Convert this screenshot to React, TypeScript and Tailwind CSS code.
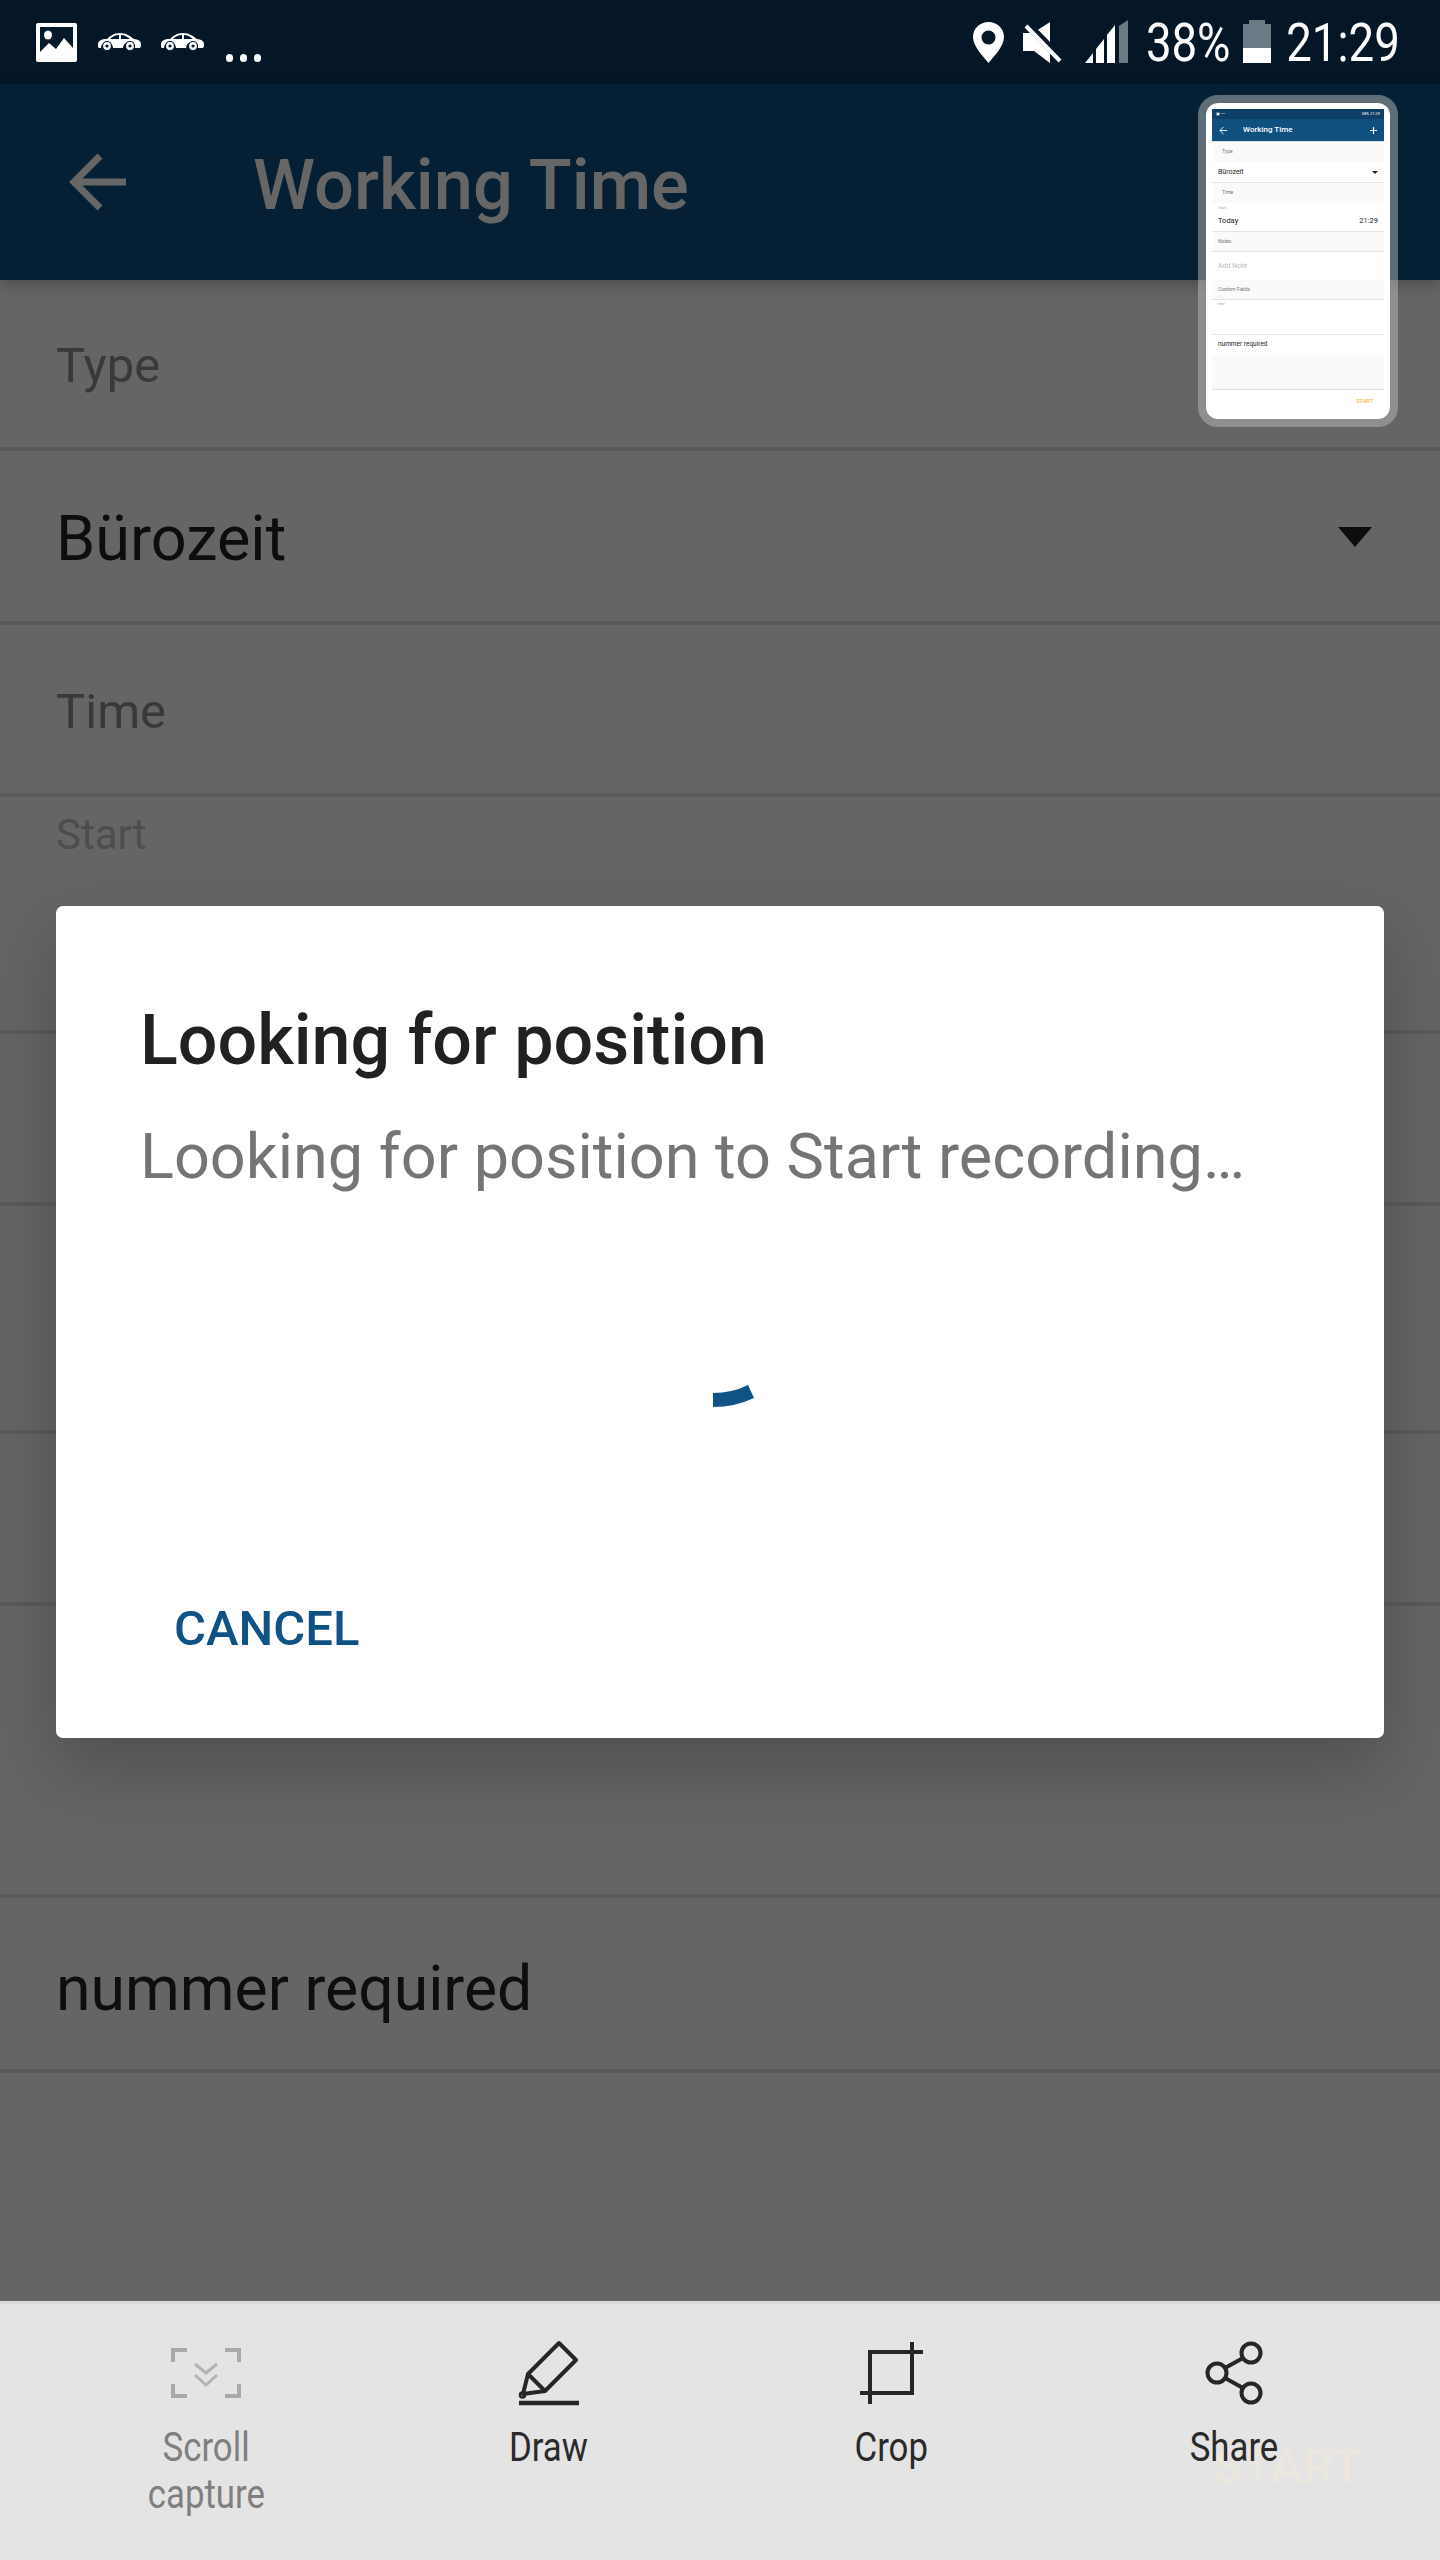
import React from "react";

function Car() {
  return (
    <svg width="45" height="20" viewBox="0 0 45 20">
      <path fill="#fff" d="M1 12c0-3 3-5 9-5 3-3 7-6 13-6s10 3 14 6c4 .6 7 2 7 5 0 2 0 4-2 4h-4a6 6 0 0 0-12 0H16a6 6 0 0 0-12 0H2c-1 0-1-2-1-4z" />
      <path fill="#06192a" d="M13 7c2-2 5-4 9-4v4zM24 3c4 0 6 2 9 4h-9z" />
      <circle cx="10" cy="14" r="4.5" fill="#fff" stroke="#06192a" strokeWidth="1.2" />
      <circle cx="10" cy="14" r="1.6" fill="#06192a" />
      <circle cx="33" cy="14" r="4.5" fill="#fff" stroke="#06192a" strokeWidth="1.2" />
      <circle cx="33" cy="14" r="1.6" fill="#06192a" />
    </svg>
  );
}

function StatusBar() {
  return (
    <div className="h-[84px] bg-[#051726] flex items-start text-white shrink-0">
      <svg className="ml-[36px] mt-[23px]" width="41" height="39" viewBox="0 0 41 39">
        <rect width="41" height="39" rx="2" fill="#fff" />
        <rect x="4" y="4" width="33" height="31" fill="#06192a" />
        <ellipse cx="12" cy="12" rx="4" ry="4.5" fill="#fff" />
        <path fill="#fff" d="M4 29l9-9 7 6 8-11 9 10v10H4z" />
      </svg>
      <div className="ml-[20px] mt-[32px]"><Car /></div>
      <div className="ml-[18px] mt-[32px]"><Car /></div>
      <div className="ml-[21px] mt-[54px] flex gap-[7px]">
        <span className="w-[7px] h-[8px] rounded-full bg-white" />
        <span className="w-[7px] h-[8px] rounded-full bg-white" />
        <span className="w-[7px] h-[8px] rounded-full bg-white" />
      </div>
      <svg className="ml-auto mt-[22px]" width="31" height="41" viewBox="0 0 31 41">
        <path fillRule="evenodd" fill="#fff" d="M15.500 0C7 0 0 6.500 0 15c0 9 9 18 15.500 26C22 33 31 24 31 15 31 6.500 24 0 15.500 0zm0 8.500a7 7 0 1 1 0 14 7 7 0 0 1 0-14z" />
      </svg>
      <svg className="ml-[19px] mt-[22px]" width="39" height="41" viewBox="0 0 39 41">
        <path fill="#fff" d="M0 11h10L27 0v41L11 29H0z" />
        <path stroke="#06192a" strokeWidth="8" d="M0 -2l39 40" />
        <path stroke="#fff" strokeWidth="4" d="M3 4l34 35" />
      </svg>
      <svg className="ml-[23px] mt-[20px]" width="43" height="43" viewBox="0 0 43 43">
        <path fill="#fff" d="M0 43l8-10v10zM11 29l8-10v24h-8zM22 15l8-10v38h-8z" />
        <path fill="#6b7a85" d="M34 6l9-6v43h-9z" />
      </svg>
      <span className="ml-[19px] w-[83px] h-[84px] flex justify-center">
        <span className="text-[53px] leading-[86px] scale-x-[0.86] whitespace-nowrap">38%</span>
      </span>
      <div className="ml-[13px] mt-[20px] w-[28px] h-[43px] flex flex-col items-center">
        <span className="w-[16px] h-[4px] bg-[#6b7a85]" />
        <span className="w-[28px] h-[24px] bg-[#6b7a85]" />
        <span className="w-[28px] h-[15px] bg-white" />
      </div>
      <span className="ml-[16px] mr-[41px] w-[112px] h-[84px] flex justify-center">
        <span className="text-[53px] leading-[86px] scale-x-[0.86] whitespace-nowrap">21:29</span>
      </span>
    </div>
  );
}

function Header() {
  return (
    <div className="h-[196px] bg-[#052034] flex items-center shrink-0 relative z-10 shadow-[0_4px_16px_rgba(0,0,0,0.28)]">
      <svg className="ml-[68px]" width="60" height="60" viewBox="0 0 60 60">
        <path d="M58 30H6M32 4L6 30l26 26" fill="none" stroke="#666" strokeWidth="7" />
      </svg>
      <span className="ml-[125px] pt-[6px] text-[70.500px] font-medium leading-none text-[#666]">Working Time</span>
    </div>
  );
}

function Row({ h, children, className = "" }: { h: string; children?: React.ReactNode; className?: string }) {
  return <div className={`${h} border-b-4 border-[#5a5a5a] pl-[56px] pr-[57px] shrink-0 ${className}`}>{children}</div>;
}

function ThumbRow({ className = "", children }: { className?: string; children?: React.ReactNode }) {
  return <div className={`flex items-center justify-between px-[6px] shrink-0 ${className}`}>{children}</div>;
}

function Thumbnail() {
  return (
    <div className="absolute z-20 left-[1198px] top-[95px] w-[200px] h-[332px] rounded-[20px] border-[8px] border-[#b9b9b9]/50 bg-transparent">
      <div className="w-full h-full rounded-[12px] bg-white p-[6px]">
        <div className="h-full flex flex-col bg-white text-[#222] overflow-hidden">
          <ThumbRow className="h-[10px] bg-[#0f3f66] text-white text-[4px] leading-none !px-[4px]">
            <span>▣ ⋯</span>
            <span>38% 21:29</span>
          </ThumbRow>
          <ThumbRow className="h-[23px] bg-[#10507f] text-white border-b border-[#dcdcdc]">
            <svg width="9" height="9" viewBox="0 0 10 10" className="mx-[1px]">
              <path d="M9 5H1M5 1L1 5l4 4" fill="none" stroke="#fff" strokeWidth="1" />
            </svg>
            <span className="text-[8px] font-medium leading-none ml-[14px] mr-auto">Working Time</span>
            <svg width="9" height="9" viewBox="0 0 9 9">
              <path d="M4.500 1v7M1 4.500h7" stroke="#fff" strokeWidth="1.200" />
            </svg>
          </ThumbRow>
          <ThumbRow className="h-[20px] bg-[#fafafa] text-[#777] text-[5px] !pl-[10px]"><span>Type</span></ThumbRow>
          <ThumbRow className="h-[21px] border-b border-[#e4e4e4] text-[7px]">
            <span>Bürozeit</span>
            <span className="w-0 h-0 border-x-[3px] border-x-transparent border-t-[3px] border-t-[#222]" />
          </ThumbRow>
          <ThumbRow className="h-[20px] bg-[#fafafa] text-[#777] text-[5px] !pl-[10px]"><span>Time</span></ThumbRow>
          <div className="h-[29px] px-[6px] border-b border-[#e4e4e4] shrink-0">
            <div className="text-[4px] leading-[6px] text-[#aaa] pt-[2px]">Start</div>
            <div className="flex justify-between text-[7.500px] leading-[14px] mt-[3px]">
              <span>Today</span>
              <span>21:29</span>
            </div>
          </div>
          <ThumbRow className="h-[20px] bg-[#fafafa] text-[#777] text-[5px] border-b border-[#e4e4e4]"><span>Notes</span></ThumbRow>
          <ThumbRow className="h-[28px] text-[#bbb] text-[7px]"><span>Add Note</span></ThumbRow>
          <ThumbRow className="h-[20px] bg-[#fafafa] text-[#777] text-[5px] border-b border-[#e4e4e4]"><span>Custom Fields</span></ThumbRow>
          <div className="h-[35px] px-[6px] border-b border-[#e4e4e4] text-[4px] leading-[6px] text-[#aaa] pt-[1px] shrink-0">test</div>
          <ThumbRow className="h-[20px] text-[6.500px]"><span>nummer required</span></ThumbRow>
          <div className="h-[35px] bg-[#fafafa] border-b border-[#e0e0e0] shrink-0" />
          <div className="flex-1 flex items-center justify-end pr-[11px] text-[#f5b93a] text-[5.500px] font-medium">START</div>
        </div>
      </div>
    </div>
  );
}

function Dialog() {
  return (
    <div className="absolute z-20 left-[56px] top-[906px] w-[1328px] h-[832px] bg-white rounded-[7px] shadow-[0_30px_70px_rgba(0,0,0,0.22)] pl-[84px] flex flex-col">
      <div className="mt-[93px] text-[70px] leading-[82px] font-medium text-[#212121] whitespace-nowrap">Looking for position</div>
      <div className="mt-[39px] text-[63px] leading-[74px] text-[#757575] whitespace-nowrap">Looking for position to Start recording…</div>
      <svg className="ml-[573px] mt-[191px]" width="41" height="22" viewBox="0 0 41 22">
        <path fill="#0f5285" d="M0 8Q19 8 35 0L41 13Q22 22 0 22Z" />
      </svg>
      <div className="ml-[34px] mt-[193px] text-[49px] leading-[58px] font-medium text-[#0f5285]">CANCEL</div>
    </div>
  );
}

function BarLabel({ lines, color }: { lines: string[]; color: string }) {
  return (
    <div className={`mt-[16px] flex flex-col items-center text-[40px] leading-[47px] ${color}`}>
      {lines.map((l) => (
        <span key={l} className="scale-x-[0.87] whitespace-nowrap">{l}</span>
      ))}
    </div>
  );
}

function BottomBar() {
  const dark = "#262626";
  return (
    <div className="relative h-[259px] bg-[#e4e4e4] border-t-[3px] border-[#d9d9d9] px-[35px] grid grid-cols-4 pt-[34px] shrink-0">
      <span className="absolute left-[1213px] top-[134px] text-[49px] leading-[58px] font-medium text-[#ebe7df]">START</span>
      <div className="relative flex flex-col items-center">
        <svg width="70" height="70" viewBox="0 0 70 70">
          <path d="M2 24V12h14M54 12h14v12M2 46v12h14M54 58h14V46" fill="none" stroke="#a9a9a9" strokeWidth="4" />
          <path d="M24 26l11 9 11-9M24 37l11 10 11-10" fill="none" stroke="#b3b3b3" strokeWidth="3" />
        </svg>
        <BarLabel lines={["Scroll", "capture"]} color="text-[#7f7f7f]" />
      </div>
      <div className="relative flex flex-col items-center">
        <svg width="70" height="70" viewBox="0 0 70 70">
          <path d="M45 5L62 22 31 53 14 36zM14 36L9 56l22-3" fill="none" stroke={dark} strokeWidth="4" strokeLinejoin="round" />
          <circle cx="8.500" cy="57" r="2.500" fill="none" stroke={dark} strokeWidth="2.500" />
          <path d="M5 65h60" stroke={dark} strokeWidth="4.500" />
        </svg>
        <BarLabel lines={["Draw"]} color="text-[#2a2a2a]" />
      </div>
      <div className="relative flex flex-col items-center">
        <svg width="70" height="70" viewBox="0 0 70 70">
          <path d="M14 66V14h53M56 4v51H4" fill="none" stroke={dark} strokeWidth="4" />
        </svg>
        <BarLabel lines={["Crop"]} color="text-[#2a2a2a]" />
      </div>
      <div className="relative flex flex-col items-center">
        <svg width="70" height="70" viewBox="0 0 70 70">
          <circle cx="52" cy="15" r="9.500" fill="none" stroke={dark} strokeWidth="4" />
          <circle cx="18" cy="35" r="9.500" fill="none" stroke={dark} strokeWidth="4" />
          <circle cx="52" cy="55" r="9.500" fill="none" stroke={dark} strokeWidth="4" />
          <path d="M26 30l18-10M26 40l18 10" stroke={dark} strokeWidth="4" />
        </svg>
        <BarLabel lines={["Share"]} color="text-[#2a2a2a]" />
      </div>
    </div>
  );
}

export default function App() {
  return (
    <div className="relative w-[1440px] h-[2560px] overflow-hidden bg-[#656565] flex flex-col font-[Roboto,sans-serif]">
      <StatusBar />
      <Header />
      <Thumbnail />
      <Row h="h-[171px]" className="flex items-center text-[49px] text-[#393939]"><span className="pt-[5px]">Type</span></Row>
      <Row h="h-[174px]" className="flex items-center justify-between text-[63px] text-[#0d0d0d] !pr-[68px]">
        <span className="pt-[6px]">Bürozeit</span>
        <span className="w-0 h-0 border-x-[17px] border-x-transparent border-t-[20px] border-t-[#0d0d0d] mt-[2px]" />
      </Row>
      <Row h="h-[172px]" className="flex items-center text-[49px] text-[#393939]"><span className="pt-[5px]">Time</span></Row>
      <Row h="h-[237px]" className="text-[42px] leading-[50px] text-[#4d4d4d] pt-[13px]"><span>Start</span></Row>
      <Row h="h-[172px]" />
      <Row h="h-[228px]" />
      <Row h="h-[172px]" />
      <Row h="h-[292px]" />
      <Row h="h-[175px]" className="flex items-center text-[62.500px] text-[#0e0e0e]"><span className="pt-[10px]">nummer required</span></Row>
      <div className="flex-1" />
      <BottomBar />
      <Dialog />
    </div>
  );
}
